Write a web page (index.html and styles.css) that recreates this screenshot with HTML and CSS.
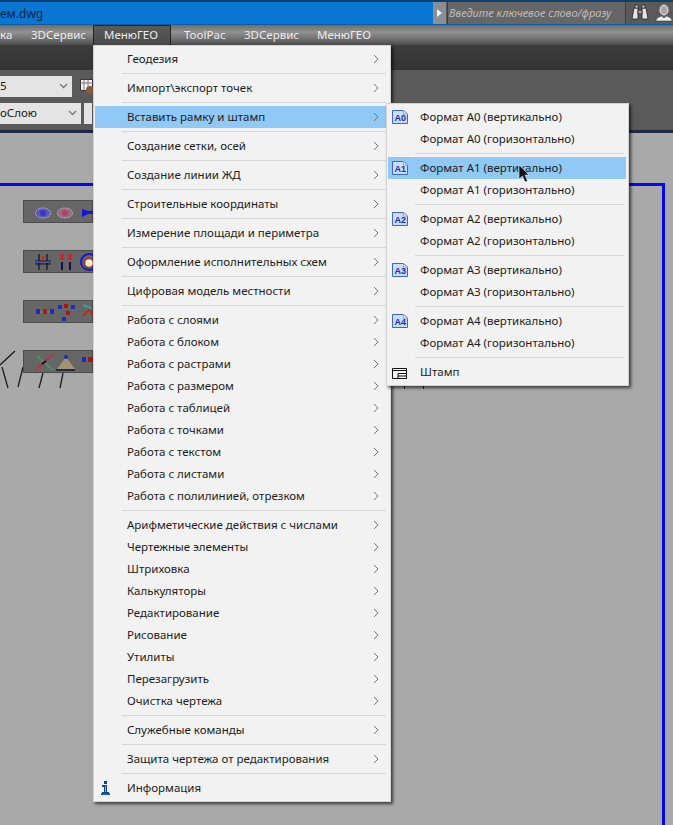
FILE: index.html
```html
<!DOCTYPE html>
<html lang="ru">
<head>
<meta charset="utf-8">
<title>МенюГЕО</title>
<link rel="stylesheet" href="styles.css">
</head>
<body>
<svg class="defs" width="0" height="0" aria-hidden="true">
  <defs>
    <symbol id="chev" viewBox="0 0 6 10"><path d="M1 1l4 4-4 4" fill="none" stroke="#757575" stroke-width="1"/></symbol>
    <symbol id="page" viewBox="0 0 16 14"><path d="M.5 .5h11l4 3.500v9.500H.5z" fill="#c9dcf8" stroke="#3f66c0"/><path d="M11.500 .5v3.500h4z" fill="#fff" stroke="#8aa0d0"/></symbol>
  </defs>
</svg>
<div class="app">
  <header class="titlebar">
    <div class="title">ем.dwg</div>
    <div class="searchbar">
      <div class="expand"><svg width="5" height="8" viewBox="0 0 5 8"><path d="M0 0l5 4-5 4z" fill="#f2f2f2"/></svg></div>
      <div class="search">Введите ключевое слово/фразу</div>
      <svg class="tb-icon" width="18" height="17" viewBox="0 0 18 17"><path d="M1 15L3 4h4v11zM11 15V4h4l2 11z" fill="#e4e4e4" stroke="#222" stroke-width=".8"/><path d="M7 6h4v4H7z" fill="#9a9a9a" stroke="#222" stroke-width=".8"/><path d="M4 1h3v3H4zM11 1h3v3h-3z" fill="#d0d0d0" stroke="#222" stroke-width=".8"/></svg>
      <svg class="tb-icon tb-user" width="18" height="18" viewBox="0 0 18 18"><ellipse cx="9" cy="6" rx="4" ry="5" fill="#a8a8a8" stroke="#f0f0f0"/><path d="M1 17c0-3 3-4 5.500-5l2.500 2 2.500-2c2.500 1 5.500 2 5.500 5z" fill="#eeeeee" stroke="#333" stroke-width=".5"/></svg>
    </div>
  </header>
  <nav class="menubar">
    <span class="mi mi-cut">ка</span>
    <span class="mi">3DСервис</span>
    <span class="mi mi-open">МенюГЕО</span>
    <span class="mi">ToolPac</span>
    <span class="mi">3DСервис</span>
    <span class="mi">МенюГЕО</span>
  </nav>
  <div class="band"></div>
  <div class="ribbon">
    <div class="ribrow">
      <div class="combo combo-a"><span>5</span><svg width="9" height="6" viewBox="0 0 9 6"><path d="M1 1l3.500 3.500L8 1" fill="none" stroke="#777" stroke-width="1.300"/></svg></div>
      <svg class="rib-icon" width="13" height="17" viewBox="0 0 13 17"><path d="M.5 1.500h12v11H.5z" fill="#f3f3f3" stroke="#333"/><path d="M.5 5h12M4 1.500v11M8 1.500v11" stroke="#777"/><circle cx="10" cy="12" r="4" fill="#8a5a3c"/></svg>
    </div>
    <div class="ribrow">
      <div class="combo combo-b"><span>оСлою</span><svg width="9" height="6" viewBox="0 0 9 6"><path d="M1 1l3.500 3.500L8 1" fill="none" stroke="#777" stroke-width="1.300"/></svg></div>
      <div class="combo-tail"></div>
    </div>
  </div>
  <main class="canvas">
    <div class="frame"></div>
    <svg class="lines" width="120" height="60" viewBox="0 0 120 60"><path d="M0 32L15 18M2 34L8 55M23 34L18 54M43 40L39 55M63 40L60 55" fill="none" stroke="#1c1c1c" stroke-width="1.300"/></svg>
    <div class="ticks"></div>
    <div class="tool t1"><svg width="70" height="23" viewBox="0 0 70 23"><ellipse cx="20" cy="13" rx="7.500" ry="5" fill="#5a58b8" stroke="#b9b9d8" stroke-dasharray="2 1"/><circle cx="20" cy="13" r="3" fill="#3a3ac8"/><ellipse cx="42" cy="13" rx="7.500" ry="5" fill="#8f7080" stroke="#c4b4b4" stroke-dasharray="2 1"/><circle cx="42" cy="13" r="3" fill="#c03a6a"/><path d="M59 9v8l6-3h5v-3h-5z" fill="#1515e0"/></svg></div>
    <div class="tool t2"><svg width="70" height="23" viewBox="0 0 70 23"><path d="M16 4v16M24 4v16M12 11h16M12 14h16" stroke="#111" stroke-width="1.200"/><path d="M13 12h5M22 12h5" stroke="#2a4fd0" stroke-width="2"/><path d="M20 6v5" stroke="#d02020" stroke-width="2"/><path d="M39 4v6M47 4v6" stroke="#e01818" stroke-width="3"/><path d="M39 12v8M47 12v8" stroke="#101050" stroke-width="2"/><circle cx="66" cy="12" r="8" fill="none" stroke="#1818d0" stroke-width="2"/><circle cx="66" cy="13" r="4.500" fill="#f2e8d8" stroke="#a03010" stroke-width="1.500"/></svg></div>
    <div class="tool t3"><svg width="70" height="23" viewBox="0 0 70 23"><path d="M12 12h16" stroke="#8a8a60"/><path d="M13 9h4v5h-4zM27 9h4v5h-4z" fill="#1c2cc0"/><path d="M20 9h4v5h-4z" fill="#b01818"/><path d="M35 5h4v4h-4zM48 5h4v4h-4zM39 17h4v4h-4z" fill="#1c2cc0"/><path d="M41 4h4v4h-4zM43 11h4v4h-4z" fill="#b81010"/><path d="M60 16l6-6 4 4" stroke="#c02810" stroke-width="2" fill="none"/><path d="M60 5l8 3" stroke="#3aa0a0" stroke-width="2"/></svg></div>
    <div class="tool t4"><svg width="70" height="23" viewBox="0 0 70 23"><path d="M13 20L30 4" stroke="#c03040" stroke-width="1.800"/><path d="M14 6l16 14" stroke="#40a070" stroke-width="1.500"/><path d="M19 14l4-3" stroke="#101010" stroke-width="2"/><path d="M34 19l9-12 9 12z" fill="#b0a078" opacity=".8"/><path d="M33 20h19" stroke="#10103a" stroke-width="1.500"/><circle cx="43" cy="7" r="2" fill="#1c2cc0"/><path d="M59 7h4v5h-4z" fill="#1c2cc0"/><path d="M65 7h5v5h-5z" fill="#a01818"/></svg></div>
  </main>

  <div class="menu main-menu">
    <div class="row"><span>Геодезия</span><svg class="arrow"><use href="#chev"/></svg></div>
    <div class="sep"></div>
    <div class="row"><span>Импорт\экспорт точек</span><svg class="arrow"><use href="#chev"/></svg></div>
    <div class="sep"></div>
    <div class="row row-hi"><span>Вставить рамку и штамп</span><svg class="arrow"><use href="#chev"/></svg></div>
    <div class="sep"></div>
    <div class="row"><span>Создание сетки, осей</span><svg class="arrow"><use href="#chev"/></svg></div>
    <div class="sep"></div>
    <div class="row"><span>Создание линии ЖД</span><svg class="arrow"><use href="#chev"/></svg></div>
    <div class="sep"></div>
    <div class="row"><span>Строительные координаты</span><svg class="arrow"><use href="#chev"/></svg></div>
    <div class="sep"></div>
    <div class="row"><span>Измерение площади и периметра</span><svg class="arrow"><use href="#chev"/></svg></div>
    <div class="sep"></div>
    <div class="row"><span>Оформление исполнительных схем</span><svg class="arrow"><use href="#chev"/></svg></div>
    <div class="sep"></div>
    <div class="row"><span>Цифровая модель местности</span><svg class="arrow"><use href="#chev"/></svg></div>
    <div class="sep"></div>
    <div class="row"><span>Работа с слоями</span><svg class="arrow"><use href="#chev"/></svg></div>
    <div class="row"><span>Работа с блоком</span><svg class="arrow"><use href="#chev"/></svg></div>
    <div class="row"><span>Работа с растрами</span><svg class="arrow"><use href="#chev"/></svg></div>
    <div class="row"><span>Работа с размером</span><svg class="arrow"><use href="#chev"/></svg></div>
    <div class="row"><span>Работа с таблицей</span><svg class="arrow"><use href="#chev"/></svg></div>
    <div class="row"><span>Работа с точками</span><svg class="arrow"><use href="#chev"/></svg></div>
    <div class="row"><span>Работа с текстом</span><svg class="arrow"><use href="#chev"/></svg></div>
    <div class="row"><span>Работа с листами</span><svg class="arrow"><use href="#chev"/></svg></div>
    <div class="row"><span>Работа с полилинией, отрезком</span><svg class="arrow"><use href="#chev"/></svg></div>
    <div class="sep"></div>
    <div class="row"><span>Арифметические действия с числами</span><svg class="arrow"><use href="#chev"/></svg></div>
    <div class="row"><span>Чертежные элементы</span><svg class="arrow"><use href="#chev"/></svg></div>
    <div class="row"><span>Штриховка</span><svg class="arrow"><use href="#chev"/></svg></div>
    <div class="row"><span>Калькуляторы</span><svg class="arrow"><use href="#chev"/></svg></div>
    <div class="row"><span>Редактирование</span><svg class="arrow"><use href="#chev"/></svg></div>
    <div class="row"><span>Рисование</span><svg class="arrow"><use href="#chev"/></svg></div>
    <div class="row"><span>Утилиты</span><svg class="arrow"><use href="#chev"/></svg></div>
    <div class="row"><span>Перезагрузить</span><svg class="arrow"><use href="#chev"/></svg></div>
    <div class="row"><span>Очистка чертежа</span><svg class="arrow"><use href="#chev"/></svg></div>
    <div class="sep"></div>
    <div class="row"><span>Служебные команды</span><svg class="arrow"><use href="#chev"/></svg></div>
    <div class="sep"></div>
    <div class="row"><span>Защита чертежа от редактирования</span><svg class="arrow"><use href="#chev"/></svg></div>
    <div class="sep"></div>
    <div class="row">
      <svg class="info" width="9" height="14" viewBox="0 0 9 14"><path d="M3 0h3v3H3zM1 4h5v7h2v1H1v-1h2V6H1z" fill="#0f3f8f"/><path d="M4 5h1v6H4z" fill="#7fb0e0"/><path d="M0 12h9v2H0z" fill="#0f5f9f"/></svg>
      <span>Информация</span>
    </div>
  </div>

  <div class="menu sub-menu">
    <div class="row"><svg class="pg"><use href="#page"/><text x="2.500" y="11" class="pgt">A0</text></svg><span>Формат А0 (вертикально)</span></div>
    <div class="row"><span>Формат А0 (горизонтально)</span></div>
    <div class="sep"></div>
    <div class="row row-hi"><svg class="pg"><use href="#page"/><text x="2.500" y="11" class="pgt">A1</text></svg><span>Формат А1 (вертикально)</span></div>
    <div class="row"><span>Формат А1 (горизонтально)</span></div>
    <div class="sep"></div>
    <div class="row"><svg class="pg"><use href="#page"/><text x="2.500" y="11" class="pgt">A2</text></svg><span>Формат А2 (вертикально)</span></div>
    <div class="row"><span>Формат А2 (горизонтально)</span></div>
    <div class="sep"></div>
    <div class="row"><svg class="pg"><use href="#page"/><text x="2.500" y="11" class="pgt">A3</text></svg><span>Формат А3 (вертикально)</span></div>
    <div class="row"><span>Формат А3 (горизонтально)</span></div>
    <div class="sep"></div>
    <div class="row"><svg class="pg"><use href="#page"/><text x="2.500" y="11" class="pgt">A4</text></svg><span>Формат А4 (вертикально)</span></div>
    <div class="row"><span>Формат А4 (горизонтально)</span></div>
    <div class="sep"></div>
    <div class="row"><svg class="pg stamp" viewBox="0 0 15 12"><path d="M.5 1.500h14v10H.5z" fill="#f7f7f7" stroke="#111"/><path d="M.5 3.500h14" stroke="#111"/><path d="M6 6.500h8.500v5H6zM6 9h8.500" fill="none" stroke="#111"/></svg><span>Штамп</span></div>
  </div>

  <svg class="cursor" width="12" height="18" viewBox="0 0 12 18"><path d="M1 0v14l3.500-3 2.500 6 2.500-1-2.500-6H11z" fill="#111" stroke="#eaeaea" stroke-width=".6"/></svg>
</div>
</body>
</html>
```
FILE: styles.css
```css
* { box-sizing: border-box; }
html, body { margin: 0; padding: 0; }
body { width: 673px; height: 825px; overflow: hidden; background: #a9a9a9; font-family: "Noto Sans", "Open Sans", "Liberation Sans", sans-serif; }
.defs { position: absolute; }
.app { position: relative; width: 673px; height: 825px; overflow: hidden; display: flex; flex-direction: column; }

.titlebar { height: 25px; flex: none; display: flex; justify-content: space-between; background: #0a76d4; border-top: 2px solid #0c3e6e; border-bottom: 1px solid #0a5ca8; }
.title { font-size: 12px; color: #12233a; padding: 3px 0 0 0; line-height: 17px; }
.searchbar { width: 240px; display: flex; align-items: stretch; background: #5a5a5a; }
.expand { width: 13px; background: #8a8f96; display: flex; align-items: center; justify-content: center; flex: none; }
.search { width: 179px; margin-left: 1px; background: #666; border: 1px solid #3e3e3e; border-width: 0 1px; font-size: 11px; font-style: italic; color: #bdbdbd; line-height: 22px; padding-left: 1px; white-space: nowrap; overflow: hidden; flex: none; }
.tb-icon { flex: none; margin: 2px 0 0 5px; }
.tb-user { margin-left: 6px; }

.menubar { height: 20px; flex: none; display: flex; align-items: stretch; background: linear-gradient(#6c6c6c, #929292 35%, #6a6a6a 75%, #4c4c4c); color: #ececec; font-size: 11.500px; line-height: 19px; }
.mi { white-space: nowrap; flex: none; }
.mi-cut { width: 31px; }
.mi:nth-child(2) { width: 62px; }
.mi-open { background: linear-gradient(#5a5a5a, #4a4a4a); border: 1px solid #222; border-bottom: 0; width: 78px; padding: 0 0 0 10px; line-height: 18px; }
.mi:nth-child(4) { width: 73px; padding-left: 13px; }
.mi:nth-child(5) { width: 73px; }
.mi:nth-child(6) { width: 60px; }

.band { height: 25px; flex: none; background: linear-gradient(#3c3c3c, #333); }
.ribbon { height: 63px; flex: none; background: #5a5a5a; padding-top: 5px; border-bottom: 3px solid #1e2a44; display: flex; flex-direction: column; gap: 5px; }
.ribrow { display: flex; align-items: center; height: 22px; }
.combo { height: 21px; background: #e4e4e4; color: #1a1a1a; font-size: 11.500px; display: flex; align-items: center; justify-content: space-between; padding-right: 4px; }
.combo span { line-height: 20px; }
.combo-a { width: 72px; }
.combo-b { width: 81px; }
.combo-tail { width: 8px; height: 21px; margin-left: 3px; background: #e4e4e4; }
.rib-icon { margin-left: 8px; }

.canvas { flex: 1; position: relative; background: #a9a9a9; }
.frame { position: absolute; left: -10px; top: 50px; width: 675px; height: 800px; border: 3.500px solid #0606ef; }
.lines { position: absolute; left: 0; top: 200px; }
.ticks { position: absolute; left: 404px; top: 252px; width: 20px; height: 4px; border-left: 1px solid #222; border-right: 1px solid #222; }
.tool { position: absolute; left: 23px; width: 70px; height: 23px; background: #666; border: 1px solid #4c4c4c; }
.tool svg { display: block; margin: -1px; }
.t1 { top: 67px; }
.t2 { top: 117px; }
.t3 { top: 167px; }
.t4 { top: 217px; }

.menu { position: absolute; background: #f2f2f2; border: 1px solid #d4d4d4; padding: 2px 1px; box-shadow: 2px 2px 3px rgba(0,0,0,.65); color: #1c1c1c; font-size: 11.500px; }
.main-menu { left: 93px; top: 45px; width: 298px; height: 757px; }
.sub-menu { left: 386px; top: 103px; width: 243px; height: 283px; }
.row { height: 22px; display: flex; align-items: center; justify-content: space-between; position: relative; white-space: nowrap; }
.row span { line-height: 22px; }
.main-menu .row { padding: 0 10px 0 32px; }
.sub-menu .row { padding: 0 9px 0 32px; margin: 0 1px 0 0; justify-content: flex-start; }
.row-hi { background: #90c8f6; }
.sep { height: 7px; position: relative; }
.sep::after { content: ""; position: absolute; left: 27px; right: 3px; top: 3px; height: 1px; background: #d6d6d6; }
.arrow { width: 6px; height: 10px; flex: none; }
.info { position: absolute; left: 6px; top: 4px; }
.pg { position: absolute; left: 4px; top: 4px; width: 16px; height: 14px; }
.pgt { font-size: 9px; font-weight: 700; fill: #1a2fb0; font-family: "Liberation Sans", sans-serif; }
.stamp { width: 15px; height: 12px; top: 6px; }
.cursor { position: absolute; left: 518px; top: 165px; }
```
